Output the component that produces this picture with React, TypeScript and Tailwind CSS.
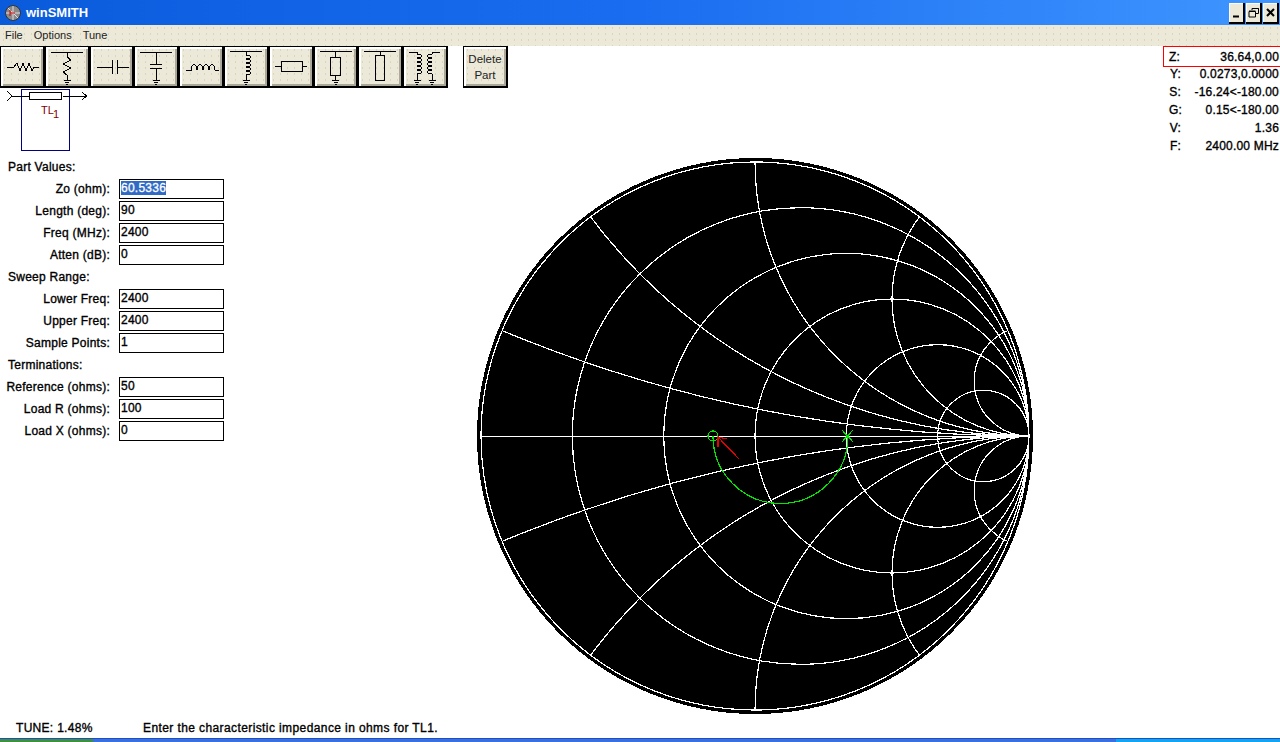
import type { ReactNode } from 'react'

const FONT = 'font-["Liberation_Sans",Arial,sans-serif]'
const DOTS = 'bg-[#ece9d8] bg-[radial-gradient(#cfcdbf_0.5px,transparent_0.8px)] bg-[length:7px_6px]'
const BEVEL = 'border-t border-l border-r-2 border-b-2 border-black shadow-[inset_2px_2px_0_#fff,inset_-2px_-2px_0_#aca899]'

type Field = { label: string; value: string; selected?: boolean }
type Group = { title: string; fields: Field[] }

const groups: Group[] = [
  {
    title: 'Part Values:',
    fields: [
      { label: 'Zo (ohm):', value: '60.5336', selected: true },
      { label: 'Length (deg):', value: '90' },
      { label: 'Freq (MHz):', value: '2400' },
      { label: 'Atten (dB):', value: '0' },
    ],
  },
  {
    title: 'Sweep Range:',
    fields: [
      { label: 'Lower Freq:', value: '2400' },
      { label: 'Upper Freq:', value: '2400' },
      { label: 'Sample Points:', value: '1' },
    ],
  },
  {
    title: 'Terminations:',
    fields: [
      { label: 'Reference (ohms):', value: '50' },
      { label: 'Load R (ohms):', value: '100' },
      { label: 'Load X (ohms):', value: '0' },
    ],
  },
]

const readouts = [
  { label: 'Y:', value: '0.0273,0.0000' },
  { label: 'S:', value: '-16.24<-180.00' },
  { label: 'G:', value: '0.15<-180.00' },
  { label: 'V:', value: '1.36' },
  { label: 'F:', value: '2400.00 MHz' },
]

function Ground({ x, y }: { x: number; y: number }) {
  return <path d={`M${x - 3.5} ${y}H${x + 3.5}M${x - 2} ${y + 2}H${x + 2}M${x - 1} ${y + 4}H${x + 1}`} />
}

// five turns going down, bulging right or left
const coil = (x: number, y: number, dir: number) => {
  const b = 6 * dir
  return `M${x} ${y}` + ` c${b} 0 ${b} 4 0 4`.repeat(5)
}

const partIcons: ReactNode[] = [
  <path key="r" d="M6 20H13L16 16L19 24L22 16L25 24L28 16L31 24L33 20H38" />,
  <g key="rs">
    <path d="M5 5H37M21 5V10L25 13L17 17L25 21L17 25L21 28V33" />
    <Ground x={21} y={33} />
  </g>,
  <path key="c" d="M6 20H21M21 13V27M26 13V27M26 20H38" />,
  <g key="cs">
    <path d="M5 5H37M21 5V17M15 17H27M15 21H27M21 21V33" />
    <Ground x={21} y={33} />
  </g>,
  <path key="l" d="M6 23H11C11 16 17 16 17 23C17 16 23 16 23 23C23 16 29 16 29 23C29 16 35 16 35 23H39" />,
  <g key="ls">
    <path d="M5 4H37M21 4V8" />
    <path d={coil(21, 8, 1)} />
    <path d="M21 28V33" />
    <Ground x={21} y={33} />
  </g>,
  <g key="tl">
    <path d="M5 19.5H11M32 19.5H37" />
    <rect x={11.5} y={14.5} width={21} height={10} />
  </g>,
  <g key="tls">
    <path d="M5 4.5H37M20.5 4.5V10M20.5 28V33" />
    <rect x={15.5} y={10.5} width={10} height={18} />
    <Ground x={20.5} y={33} />
  </g>,
  <g key="tlo">
    <path d="M5 4.5H37M21 4.5V8" />
    <rect x={16.5} y={8.5} width={9} height={25} />
  </g>,
  <g key="xf">
    <path d="M5 5H13V7M36 5H28V7" />
    <path d={coil(13, 7, 1)} />
    <path d={coil(28, 7, -1)} />
    <path d="M13 27V33M28 27V33" />
    <Ground x={13} y={33} />
    <Ground x={28} y={33} />
  </g>,
]

function PartButton({ children }: { children: ReactNode }) {
  return (
    <div className={`h-[42px] w-[44.8px] ${BEVEL} ${DOTS}`}>
      <svg viewBox="0 0 42 39" className="h-[39px] w-[42px]" fill="none" stroke="black" strokeWidth={1} shapeRendering="crispEdges">
        {children}
      </svg>
    </div>
  )
}

function Toolbar() {
  return (
    <div className="flex h-[42px]">
      {partIcons.map((icon, i) => (
        <PartButton key={i}>{icon}</PartButton>
      ))}
      <div className={`ml-[15px] flex h-[42px] w-[45px] flex-col items-center justify-center text-[11.5px] leading-[16px] text-[#222] [-webkit-text-stroke:0] ${BEVEL} ${DOTS}`}>
        <span>Delete</span>
        <span>Part</span>
      </div>
    </div>
  )
}

function Schematic() {
  return (
    <svg width={92} height={66} viewBox="0 0 92 66" fill="none" className="block" shapeRendering="crispEdges">
      <rect x={21.5} y={1.5} width={48} height={61} stroke="#000080" />
      <path d="M7 3L12 8L7 13M12 8H29.5M62.5 8H86M82 4L86.5 8L82 12" stroke="black" />
      <rect x={29.5} y={4.5} width={32} height={7} stroke="black" fill="white" />
      <text x={41} y={26} fontSize={11} fill="#800000" stroke="none" className="[-webkit-text-stroke:0]">TL</text>
      <text x={53} y={30} fontSize={11} fill="#800000" stroke="none" className="[-webkit-text-stroke:0]">1</text>
    </svg>
  )
}

function FormPanel() {
  return (
    <div className="flex w-[477px] flex-col gap-[2px] pt-[1px] tracking-[0.25px]">
      {groups.map((group) => (
        <div key={group.title} className="flex flex-col">
          <div className="h-[20px] pl-[8px] leading-[17px]">{group.title}</div>
          {group.fields.map((field) => (
            <div key={field.label} className="flex h-[22px] items-start">
              <div className="w-[110px] text-right leading-[21px]">{field.label}</div>
              <div className="ml-[9px] h-[20px] w-[105px] border border-black bg-white pl-[1px] leading-[16px]">
                {field.selected ? (
                  <span className="bg-[#316ac5] text-white [-webkit-text-stroke:0.3px_white]">{field.value}</span>
                ) : (
                  field.value
                )}
              </div>
            </div>
          ))}
        </div>
      ))}
    </div>
  )
}

function SmithChart() {
  const R = 274
  const c = 278
  const rValues = [0.2, 0.5, 1, 2, 5]
  const xValues = [0.2, 0.5, 1, 2, 5]
  const right = c + R

  return (
    <svg width={556} height={556} viewBox="0 0 556 556" fill="none" shapeRendering="crispEdges" className="block">
      <defs>
        <clipPath id="unit">
          <circle cx={c} cy={c} r={R} />
        </clipPath>
      </defs>
      <circle cx={c} cy={c} r={278} fill="black" />
      <g clipPath="url(#unit)" stroke="white" strokeWidth={1.2}>
        {rValues.map((r) => {
          const radius = R / (r + 1)
          return <circle key={r} cx={right - radius} cy={c} r={radius} />
        })}
        {xValues.map((x) => {
          const radius = R / x
          return (
            <g key={x}>
              <circle cx={right} cy={c - radius} r={radius} />
              <circle cx={right} cy={c + radius} r={radius} />
            </g>
          )
        })}
        <path d={`M${c - R} ${c + 0.5}H${right}`} />
      </g>
      <circle cx={c} cy={c} r={R} stroke="white" strokeWidth={1.2} />
      <path d="M236 278A67.5 67.5 0 0 0 371 278" stroke="#00e800" strokeWidth={1.2} />
      <circle cx={236} cy={278} r={5} stroke="#00e800" strokeWidth={1.2} />
      <path d="M365 272L376 284M376 272L365 284" stroke="#00e800" strokeWidth={1.2} />
      <path d="M262 301L241 279M241 279L250 281M241 279L241 289" stroke="#e80000" strokeWidth={1.2} />
    </svg>
  )
}

function WindowButton({ children }: { children: ReactNode }) {
  return (
    <div className="flex h-[21px] w-[16px] items-center justify-center border-r-2 border-b-2 border-black bg-[#ece9d8] shadow-[inset_1px_1px_0_#fff]">
      <svg viewBox="0 0 13 13" className="h-[13px] w-[13px]" fill="none" stroke="black">
        {children}
      </svg>
    </div>
  )
}

export default function App() {
  return (
    <div className={`flex h-[742px] w-[1280px] flex-col overflow-hidden bg-white text-[12px] text-black [-webkit-text-stroke:0.35px_black] ${FONT}`}>
      <div className="flex h-[25px] items-center justify-between bg-gradient-to-r from-[#0a5bdc] via-[#1a6df0] to-[#3f96ff] pt-[1px] pr-[1px] pl-[4px]">
        <div className="flex items-center gap-[4px]">
          <svg width={18} height={18} viewBox="0 0 18 18" fill="none">
            <circle cx={9} cy={9} r={7.5} fill="#8a8a8a" stroke="#333" />
            <path d="M2 9H16M9 2V16M4 4L14 14" stroke="#ddd" />
            <path d="M6 6V12M6 9H11" stroke="#d00000" />
          </svg>
          <span className="text-[13px] font-bold text-white [-webkit-text-stroke:0]">winSMITH</span>
        </div>
        <div className="flex items-center gap-[1px]">
          <WindowButton>
            <path d="M3 10.5H9" strokeWidth={2} />
          </WindowButton>
          <WindowButton>
            <path d="M5 4V2.5H11.5V7.5H9M2 5.5H8.5V11H2Z M2 5H8.5M5 2.5H11.5" />
          </WindowButton>
          <WindowButton>
            <path d="M3 3L10 10M10 3L3 10" strokeWidth={2} />
          </WindowButton>
        </div>
      </div>

      <div className={`flex h-[21px] items-center gap-[11px] pb-[1px] pl-[5px] text-[11px] text-[#222] [-webkit-text-stroke:0] ${DOTS}`}>
        <span>File</span>
        <span>Options</span>
        <span>Tune</span>
      </div>

      <div className="flex h-[112px] justify-between">
        <div className="flex flex-col">
          <Toolbar />
          <Schematic />
        </div>
        <div className="flex w-[117px] flex-col tracking-[0.2px]">
          <div className="flex h-[21px] items-center border border-r-0 border-[#ff0000] pr-[1px] pl-[5px]">
            <span className="w-[14px]">Z:</span>
            <span className="flex-1 text-right">36.64,0.00</span>
          </div>
          {readouts.map((row) => (
            <div key={row.label} className="flex h-[18px] items-start pr-[1px] pl-[6px] leading-[14px]">
              <span className="w-[12px] text-right">{row.label}</span>
              <span className="flex-1 text-right">{row.value}</span>
            </div>
          ))}
        </div>
      </div>

      <div className="flex h-[556px]">
        <FormPanel />
        <SmithChart />
      </div>

      <div className="flex h-[24px] items-center pt-[3px] pl-[16px]">
        <span className="w-[127px] tracking-[0.3px]">TUNE: 1.48%</span>
        <span className="tracking-[0.4px]">Enter the characteristic impedance in ohms for TL1.</span>
      </div>

      <div className="flex h-[4px] border-t border-[#1c4fc4] bg-[#3a6fe0]">
        <div className="w-[93px] bg-[#3f8f3f]" />
        <div className="flex-1" />
        <div className="w-[164px] bg-[#10a5f0]" />
      </div>
    </div>
  )
}
